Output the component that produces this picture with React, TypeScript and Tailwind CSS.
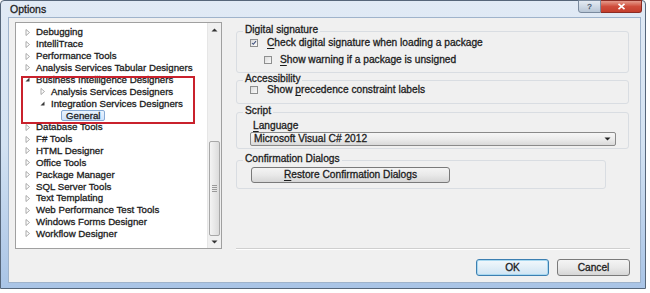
import React from "react";

type Node = { label: string; level: number; state: "c" | "e" | "n"; selected?: boolean };

const tree: Node[] = [
  { label: "Debugging", level: 0, state: "c" },
  { label: "IntelliTrace", level: 0, state: "c" },
  { label: "Performance Tools", level: 0, state: "c" },
  { label: "Analysis Services Tabular Designers", level: 0, state: "c" },
  { label: "Business Intelligence Designers", level: 0, state: "e" },
  { label: "Analysis Services Designers", level: 1, state: "c" },
  { label: "Integration Services Designers", level: 1, state: "e" },
  { label: "General", level: 2, state: "n", selected: true },
  { label: "Database Tools", level: 0, state: "c" },
  { label: "F# Tools", level: 0, state: "c" },
  { label: "HTML Designer", level: 0, state: "c" },
  { label: "Office Tools", level: 0, state: "c" },
  { label: "Package Manager", level: 0, state: "c" },
  { label: "SQL Server Tools", level: 0, state: "c" },
  { label: "Text Templating", level: 0, state: "c" },
  { label: "Web Performance Test Tools", level: 0, state: "c" },
  { label: "Windows Forms Designer", level: 0, state: "c" },
  { label: "Workflow Designer", level: 0, state: "c" },
];

const indents = ["pl-[7px]", "pl-[22px]", "pl-[37px]"];

function Arrow({ state }: { state: "c" | "e" | "n" }) {
  return (
    <span className="w-[9px] h-[9px] flex-none">
      {state === "c" && (
        <svg width="9" height="9" viewBox="0 0 9 9">
          <path d="M3 1.5 L6.5 4.5 L3 7.5 Z" fill="#fff" stroke="#a2a2a2" strokeWidth="0.9" />
        </svg>
      )}
      {state === "e" && (
        <svg width="9" height="9" viewBox="0 0 9 9">
          <path d="M6.5 2.5 L6.5 6.5 L2.5 6.5 Z" fill="#3a3a3a" />
        </svg>
      )}
    </span>
  );
}

function Check({ checked }: { checked?: boolean }) {
  return (
    <span className="w-[8px] h-[8px] flex-none border border-[#8e8f8f] bg-gradient-to-br from-[#dcdcdc] to-[#fafafa] flex items-center justify-center">
      {checked && (
        <svg width="8" height="8" viewBox="0 0 8 8">
          <path d="M1.3 4 L3.1 5.8 L6.7 1.6" fill="none" stroke="#3d4f7d" strokeWidth="1.4" />
        </svg>
      )}
    </span>
  );
}

function U({ c }: { c: string }) {
  return <span className="underline underline-offset-[1.5px] decoration-[0.8px]">{c}</span>;
}

function GroupLabel({ text, className }: { text: string; className?: string }) {
  return (
    <div className={"relative z-10 h-[12px] leading-[12px] w-fit ml-[7px] px-[2px] bg-[#f0f0f0] " + (className ?? "")}>
      {text}
    </div>
  );
}

export default function App() {
  return (
    <div
      className="w-[650px] h-[293px] bg-white text-[#1c1c1c] text-[9.7px] [-webkit-text-stroke:0.3px]"
      style={{ fontFamily: '"Liberation Sans", Arial, sans-serif' }}
    >
      <div className="w-[646px] h-[289px] flex flex-col border border-[#56667a] rounded-t-[4px] bg-gradient-to-b from-[#e1eaf5] via-[#d3e2f2] to-[#a9c4e6] pl-[7px] pr-[4px] pb-[5px]">
        {/* title bar */}
        <div className="h-[16px] flex-none flex items-start justify-between">
          <div className="ml-[2px] mt-[2px] text-[10.5px] leading-[13px] text-[#1e1e1e]">Options</div>
          <div className="flex -mt-[1px] -mr-[1px]">
            <div className="w-[23px] h-[13px] rounded-bl-[3px] border border-[#7a8a9e] bg-gradient-to-b from-[#e4ebf3] to-[#b8c6d6] flex items-center justify-center text-[8px] leading-none text-[#4a5a70]">
              ?
            </div>
            <div className="w-[41px] h-[13px] rounded-br-[3px] border border-[#8b2c24] border-l-0 bg-gradient-to-b from-[#e49a8c] via-[#cf4d3c] to-[#c43e2d] flex items-center justify-center">
              <svg width="9" height="7" viewBox="0 0 9 7">
                <path d="M1.5 0.8 L7.5 6.2 M7.5 0.8 L1.5 6.2" stroke="#fff" strokeWidth="1.6" />
              </svg>
            </div>
          </div>
        </div>

        {/* client */}
        <div className="h-[266px] flex-none flex bg-[#f0f0f0] border border-[#9fb3cb] pl-[6px] pt-[4px] pr-[10px]">
          {/* tree */}
          <div className="relative w-[207px] h-[227px] flex-none flex bg-white border border-[#a0a0a0]">
            <div className="flex-1 pt-[3.4px]">
              {tree.map((n) => (
                <div key={n.label} className={"h-[11.86px] flex items-center whitespace-nowrap " + indents[n.level]}>
                  <Arrow state={n.state} />
                  {n.selected ? (
                    <span className="-ml-[1px] h-[11px] leading-[10px] px-[4px] border border-[#86a9d4] rounded-[2px] bg-gradient-to-b from-[#eaf3fd] to-[#cfe3fb]">
                      {n.label}
                    </span>
                  ) : (
                    <span className="ml-[4px] leading-[11.86px]">{n.label}</span>
                  )}
                </div>
              ))}
            </div>
            {/* scrollbar */}
            <div className="w-[14px] flex-none flex flex-col bg-[#f0f0f0] border-l border-[#e6e6e6]">
              <div className="h-[14px] flex items-center justify-center">
                <svg width="7" height="4" viewBox="0 0 7 4">
                  <path d="M0.5 3.5 L3.5 0.5 L6.5 3.5 Z" fill="#333" />
                </svg>
              </div>
              <div className="h-[104px]" />
              <div className="h-[95px] mx-[1px] rounded-[2px] border border-[#a8a8a8] bg-gradient-to-r from-[#f4f4f4] to-[#dcdcdc] flex flex-col items-center justify-center gap-[1px]">
                <span className="w-[5px] h-px bg-[#9a9a9a]" />
                <span className="w-[5px] h-px bg-[#9a9a9a]" />
                <span className="w-[5px] h-px bg-[#9a9a9a]" />
                <span className="w-[5px] h-px bg-[#9a9a9a]" />
              </div>
              <div className="h-[12px] flex items-center justify-center">
                <svg width="7" height="4" viewBox="0 0 7 4">
                  <path d="M0.5 0.5 L3.5 3.5 L6.5 0.5 Z" fill="#333" />
                </svg>
              </div>
            </div>
            {/* red annotation */}
            <div className="absolute left-[5px] top-[53px] w-[174px] h-[48px] border-2 border-[#c9212c] pointer-events-none" />
          </div>

          {/* right column */}
          <div className="ml-[14px] w-[394px] flex-none flex flex-col pt-[2px] text-[10.2px]">
            <GroupLabel text="Digital signature" />
            <div className="-mt-[5px] w-[393px] h-[42px] border border-[#d9dde2] rounded-[3px] pt-[5px] flex flex-col gap-[5px]">
              <div className="h-[12px] flex items-center pl-[13px] leading-[12px]">
                <Check checked />
                <span className="ml-[9px]"><U c="C" />heck digital signature when loading a package</span>
              </div>
              <div className="h-[12px] flex items-center pl-[27px] leading-[12px]">
                <Check />
                <span className="ml-[8px]"><U c="S" />how warning if a package is unsigned</span>
              </div>
            </div>

            <GroupLabel text="Accessibility" />
            <div className="-mt-[5px] w-[393px] h-[24px] border border-[#d9dde2] rounded-[3px] pt-[3px]">
              <div className="h-[12px] flex items-center pl-[13px] leading-[12px]">
                <Check />
                <span className="ml-[9px]">Show <U c="p" />recedence constraint labels</span>
              </div>
            </div>

            <GroupLabel text="Script" className="mt-[1px]" />
            <div className="-mt-[5px] w-[393px] h-[37px] border border-[#d9dde2] rounded-[3px] pt-[7px]">
              <div className="h-[12px] leading-[12px] pl-[16px]"><U c="L" />anguage</div>
              <div className="ml-[13px] w-[366px] h-[14px] border border-[#8a8a8a] rounded-[2px] bg-gradient-to-b from-[#f6f6f6] via-[#ececec] to-[#d9d9d9] flex items-center justify-between pl-[3px] pr-[4px]">
                <span className="leading-[12px]">Microsoft Visual C# 2012</span>
                <svg width="7" height="4" viewBox="0 0 7 4">
                  <path d="M0.5 0.5 L3.5 3.5 L6.5 0.5 Z" fill="#222" />
                </svg>
              </div>
            </div>

            <GroupLabel text="Confirmation Dialogs" className="mt-[4px]" />
            <div className="-mt-[5px] w-[370px] h-[29px] border border-[#d9dde2] rounded-[3px] pt-[6px]">
              <div className="ml-[14px] w-[199px] h-[16px] border border-[#7a7a7a] rounded-[3px] bg-gradient-to-b from-[#f4f4f4] via-[#e9e9e9] to-[#d6d6d6] flex items-center justify-center leading-[12px]">
                <span><U c="R" />estore Confirmation Dialogs</span>
              </div>
            </div>

            <div className="mt-[59px] w-[394px] h-px bg-[#cfcfcf] shadow-[0_1px_0_#ffffff]" />

            <div className="mt-[10px] flex justify-end gap-[8px]">
              <div className="w-[73px] h-[17px] border border-[#3c7fb1] rounded-[3px] bg-gradient-to-b from-[#f2f8fc] via-[#e1eef7] to-[#cfe4f3] shadow-[inset_0_0_0_1px_#a8d8f0] flex items-center justify-center leading-[12px]">
                OK
              </div>
              <div className="w-[73px] h-[17px] border border-[#7a7a7a] rounded-[3px] bg-gradient-to-b from-[#f4f4f4] via-[#e9e9e9] to-[#d6d6d6] flex items-center justify-center leading-[12px]">
                Cancel
              </div>
            </div>
          </div>
        </div>
      </div>
    </div>
  );
}
